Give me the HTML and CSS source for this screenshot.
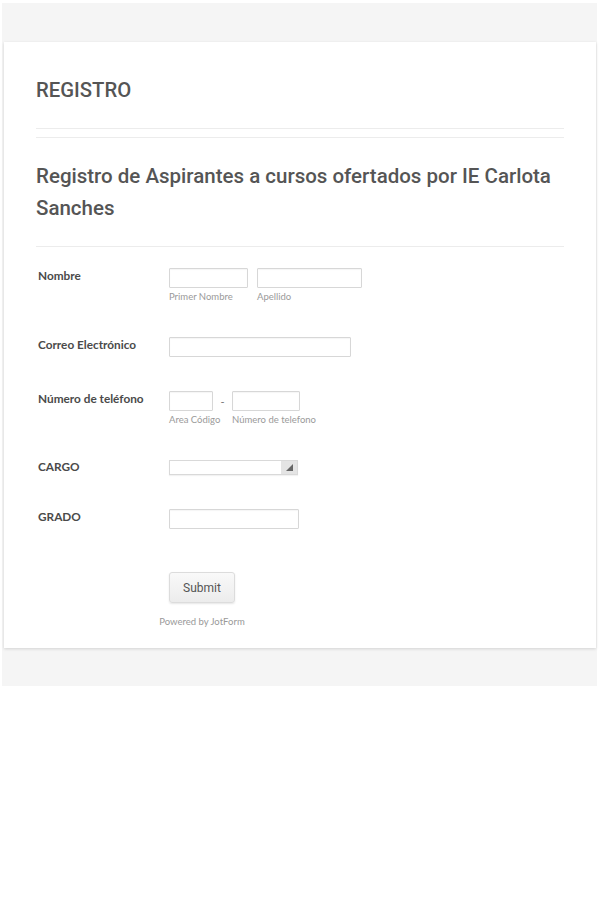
FILE: index.html
```html
<!DOCTYPE html>
<html lang="es">
<head>
<meta charset="utf-8">
<title>REGISTRO</title>
<link rel="stylesheet" href="styles.css">
</head>
<body>
<div class="page">
  <div class="card">
    <div class="header">
      <h1 class="form-title">REGISTRO</h1>
    </div>
    <div class="subheader">
      <h2 class="form-sub">Registro de Aspirantes a cursos ofertados por IE Carlota Sanches</h2>
    </div>
    <div class="fields">
      <div class="row">
        <label class="label">Nombre</label>
        <div class="controls">
          <div class="sub-field">
            <div class="input w78"></div>
            <span class="sublabel">Primer Nombre</span>
          </div>
          <div class="sub-field">
            <div class="input w104"></div>
            <span class="sublabel">Apellido</span>
          </div>
        </div>
      </div>
      <div class="row">
        <label class="label">Correo Electrónico</label>
        <div class="controls">
          <div class="input w181"></div>
        </div>
      </div>
      <div class="row">
        <label class="label">Número de teléfono</label>
        <div class="controls phone">
          <div class="sub-field">
            <div class="input w43"></div>
            <span class="sublabel">Area Código</span>
          </div>
          <span class="dash">-</span>
          <div class="sub-field">
            <div class="input w68"></div>
            <span class="sublabel">Número de telefono</span>
          </div>
        </div>
      </div>
      <div class="row row-select">
        <label class="label">CARGO</label>
        <div class="controls">
          <div class="select">
            <span class="select-arrow"><svg width="7" height="7" viewBox="0 0 7 7"><path d="M7 0 L7 7 L0 7 Z" fill="#666"/></svg></span>
          </div>
        </div>
      </div>
      <div class="row">
        <label class="label">GRADO</label>
        <div class="controls">
          <div class="input w129"></div>
        </div>
      </div>
      <div class="row row-submit">
        <span class="label"></span>
        <div class="submit-wrap">
          <button class="submit" type="button">Submit</button>
          <span class="powered">Powered by JotForm</span>
        </div>
      </div>
    </div>
  </div>
</div>
</body>
</html>
```
FILE: styles.css
```css
html, body {
  margin: 0;
  padding: 0;
  background: #ffffff;
}
body {
  font-family: "Lato", "Liberation Sans", sans-serif;
}
.page {
  margin: 3px 2px 0 2px;
  width: 595px;
  height: 683px;
  background: #f5f5f5;
  padding-top: 39px;
  box-sizing: border-box;
}
.card {
  margin-left: 2px;
  width: 592px;
  height: 606px;
  background: #ffffff;
  box-shadow: 0 1px 3px rgba(0, 0, 0, 0.14);
  box-sizing: border-box;
  padding: 0 32px;
}
.header {
  padding-top: 36px;
  padding-bottom: 26px;
  border-bottom: 1px solid #ececec;
}
.form-title {
  margin: 0;
  font-family: "Roboto", "Liberation Sans", sans-serif;
  font-weight: 500;
  font-size: 20.3px;
  line-height: 24px;
  color: #555555;
}
.subheader {
  margin-top: 8px;
  border-top: 1px solid #ececec;
  padding-top: 22px;
  padding-bottom: 22px;
  border-bottom: 1px solid #ececec;
}
.form-sub {
  margin: 0;
  font-family: "Roboto", "Liberation Sans", sans-serif;
  font-weight: 500;
  font-size: 20.5px;
  line-height: 32px;
  color: #555555;
}
.fields {
  padding-top: 21px;
  display: flex;
  flex-direction: column;
  gap: 34px;
}
.row {
  display: grid;
  grid-template-columns: 133px 1fr;
  align-items: start;
}
.label {
  display: block;
  padding-left: 2px;
  font-weight: 700;
  font-size: 11.8px;
  line-height: 14px;
  padding-top: 1px;
  color: #4a4a4a;
}
.row-select .label {
  padding-top: 0;
}
.controls {
  display: flex;
  gap: 9px;
}
.controls.phone {
  gap: 0;
}
.sub-field {
  display: flex;
  flex-direction: column;
}
.input {
  height: 20px;
  box-sizing: border-box;
  border: 1px solid #d7d7d7;
  border-radius: 1px;
  background: #ffffff;
  box-shadow: inset 0 1px 1px rgba(0, 0, 0, 0.04);
}
.w78 { width: 79px; }
.w104 { width: 105px; }
.w181 { width: 182px; }
.w43 { width: 44px; }
.w68 { width: 68px; }
.w129 { width: 130px; }
.sublabel {
  width: 0;
  font-size: 9.5px;
  line-height: 13px;
  color: #9a9a9a;
  padding-top: 2px;
  white-space: nowrap;
}
.dash {
  width: 19px;
  text-align: center;
  font-size: 11px;
  line-height: 22px;
  color: #777777;
}
.select {
  width: 129px;
  height: 15px;
  box-sizing: border-box;
  border: 1px solid #d9d9d9;
  background: #ffffff;
  display: flex;
  justify-content: flex-end;
  box-shadow: 0 1px 1px rgba(0, 0, 0, 0.05);
}
.select-arrow {
  width: 16px;
  height: 13px;
  background: #e4e4e4;
  display: flex;
  align-items: center;
  justify-content: center;
}
.row-submit {
  margin-top: 9px;
}
.submit-wrap {
  width: 66px;
  display: flex;
  flex-direction: column;
  align-items: center;
}
.submit {
  width: 66px;
  height: 31px;
  border: 1px solid #dcdcdc;
  border-radius: 3px;
  background: linear-gradient(#f9f9f9, #ececec);
  box-shadow: 0 1px 2px rgba(0, 0, 0, 0.1);
  font-family: "Roboto", "Liberation Sans", sans-serif;
  font-size: 12px;
  color: #555555;
  padding: 0;
}
.powered {
  margin-top: 13px;
  white-space: nowrap;
  font-size: 9.5px;
  line-height: 12px;
  color: #999999;
}
```
